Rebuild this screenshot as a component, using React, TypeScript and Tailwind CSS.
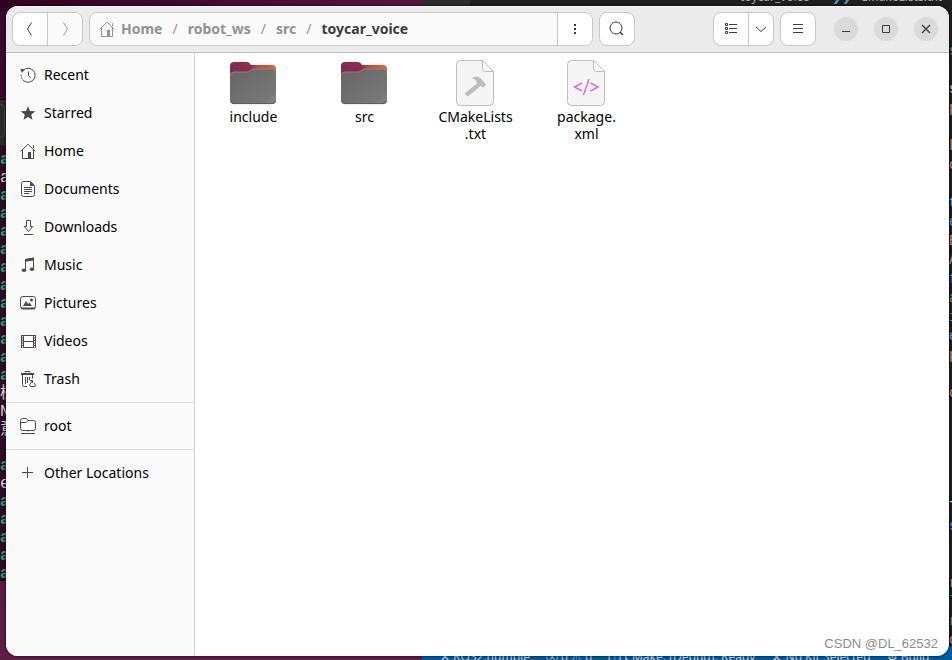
import type { ReactNode } from "react";

function Icon({ children, className = "" }: { children: ReactNode; className?: string }) {
  return (
    <svg viewBox="0 0 16 16" className={`size-4 shrink-0 ${className}`} fill="none" stroke="currentColor" aria-hidden="true">
      {children}
    </svg>
  );
}

const HomeIcon = () => (
  <Icon>
    <path d="M.6 8.4 8 1.2l7.4 7.2M2.5 7v8.5h11V7M13.5 2.2v3" />
    <path d="M8 9h3v6.5H8z" fill="currentColor" stroke="none" />
  </Icon>
);

const icons: Record<string, ReactNode> = {
  Recent: (
    <Icon>
      <path d="M3.1 3.4A7 7 0 1 1 3 13" />
      <path d="M1.200 7.500A7 7 0 0 0 3 13" strokeDasharray="2 1" />
      <path d="M8.500 4.500v4l2 2.200" />
      <path d="M.4 1.800 5 2.400 1.800 5.800z" fill="currentColor" stroke="none" />
    </Icon>
  ),
  Starred: (
    <Icon>
      <path d="m8 1 2 4.900 5.200.4-4 3.400 1.300 5.100L8 12l-4.500 2.800 1.300-5.100-4-3.400L6 5.900z" fill="currentColor" stroke="none" />
    </Icon>
  ),
  Home: <HomeIcon />,
  Documents: (
    <Icon>
      <path d="M3.500.5h7l4 4v9a2 2 0 0 1-2 2h-9a2 2 0 0 1-2-2v-11a2 2 0 0 1 2-2zM4 6.500h8M4 8.500h8M4 10.500h8M4 12.500h5" />
      <path d="M10 .5 14.500 5H10z" fill="currentColor" stroke="none" />
    </Icon>
  ),
  Downloads: (
    <Icon>
      <path d="M6.500 1.500h4v6h2.200l-4.200 5-4.200-5h2.200zM4 15.500h9" />
    </Icon>
  ),
  Music: (
    <Icon>
      <path d="M5.500 13V2.700l8-1.500V12" />
      <path d="M5 1.900 14 .6v2.900L5 4.800z" fill="currentColor" stroke="none" />
      <ellipse cx="4" cy="13.300" rx="2.200" ry="1.800" fill="currentColor" stroke="none" />
      <ellipse cx="12" cy="12.300" rx="2.200" ry="1.800" fill="currentColor" stroke="none" />
    </Icon>
  ),
  Pictures: (
    <Icon>
      <rect x=".5" y="1.500" width="15" height="12" rx="2" />
      <path d="M1 12.500v.5q0 1.500 1.500 1.500h11q1.500 0 1.500-1.500v-.5zM3 11l3-5 2 3 1.500-1.500L12 11z" fill="currentColor" stroke="none" />
      <circle cx="11.500" cy="5" r="1.500" fill="currentColor" stroke="none" />
    </Icon>
  ),
  Videos: (
    <Icon>
      <path d="M3.500 2v12.500M13.500 2v12.500M3.500 2.500h10M3.500 8.500h10M3.500 14.500h10M1.500 2v13M15.500 2v13" />
      <path d="M2.500 2v13M14.500 2v13" strokeDasharray="1 1.500" />
    </Icon>
  ),
  Trash: (
    <Icon>
      <path d="M1 2.500h13M1 3.500h13M5 1.500V.5h5v1M2.500 4v9.500a2 2 0 0 0 2 2H7M12.500 4v3.500M5.500 6v7M7.500 6v6M9.500 6v3" />
      <path d="m12.500 9.500-2.800 4.300q-.4 1.700 1.300 1.700h3q1.700 0 1.300-1.700L14 12M10 9.500h2.500V12" />
    </Icon>
  ),
  root: (
    <Icon>
      <path d="M.5 10.500v-8a2 2 0 0 1 2-2h4L8 2.500h5.500a2 2 0 0 1 2 2v6a2 2 0 0 1-2 2h-11a2 2 0 0 1-2-2zM.5 4.500H6l2-2M1 15.500h14M8 12.500v1" />
    </Icon>
  ),
  "Other Locations": (
    <Icon>
      <path d="M7.500 2v11M2 7.500h11" />
    </Icon>
  ),
};

const placeGroups = [
  ["Recent", "Starred", "Home", "Documents", "Downloads", "Music", "Pictures", "Videos", "Trash"],
  ["root"],
  ["Other Locations"],
];

function FolderArt() {
  return (
    <svg viewBox="1 0 48 48" className="size-12" aria-hidden="true">
      <defs>
        <linearGradient id="tab" x1="0" x2="1">
          <stop offset="0" stopColor="#7f2a55" />
          <stop offset=".45" stopColor="#8f2c4c" />
          <stop offset=".6" stopColor="#c44a3c" />
          <stop offset="1" stopColor="#ec5f2b" />
        </linearGradient>
        <linearGradient id="front" x1="0" y1="0" x2="1" y2="1">
          <stop offset="0" stopColor="#656565" />
          <stop offset="1" stopColor="#7b7b7b" />
        </linearGradient>
      </defs>
      <path d="M1 7a4 4 0 0 1 4-4h13q2 0 3 1.500l1 1.500h21a4 4 0 0 1 4 4v12H1z" fill="url(#tab)" />
      <path d="M1 17q0-4 4-4h13q2 0 3.500-1.500Q23 10 25 10h18q4 0 4 4v27a4 4 0 0 1-4 4H5a4 4 0 0 1-4-4z" fill="url(#front)" />
      <path d="M1.500 16.500q0-3.500 3.500-3.500h13q2 0 3.500-1.500Q23 10 25 10h18q3.500 0 3.500 3.500" fill="none" stroke="#8d8d8d" strokeWidth=".8" />
      <path d="M47 34v7a4 4 0 0 1-4 4h-7z" fill="#7f7f7f" />
      <path d="M1.500 42q.8 2.600 3.500 2.600h38q2.700 0 3.500-2.600" fill="none" stroke="#5c5c5c" />
    </svg>
  );
}

function PageArt({ children }: { children: ReactNode }) {
  return (
    <svg viewBox="0 0 48 48" className="size-12" aria-hidden="true">
      <path d="M8.500 1.500h22l11 11v30a4 4 0 0 1-4 4h-29a4 4 0 0 1-4-4v-37a4 4 0 0 1 4-4z" fill="#f5f5f5" stroke="#bdbdbd" />
      <path d="M30.500 1.500v8a3 3 0 0 0 3 3h8z" fill="#fcfcfc" stroke="#bdbdbd" />
      {children}
    </svg>
  );
}

const files: { name: string; lines: string[]; art: ReactNode }[] = [
  { name: "include", lines: ["include"], art: <FolderArt /> },
  { name: "src", lines: ["src"], art: <FolderArt /> },
  {
    name: "CMakeLists.txt",
    lines: ["CMakeLists", ".txt"],
    art: (
      <PageArt>
        <path d="M12.500 34.500 25 24.500l-1-3q-2-2.500-4.500-2 4-3 9-.5l5.500 6.500-2.500 3-3-1.500L16 37.500z" fill="#bdbdbd" />
      </PageArt>
    ),
  },
  {
    name: "package.xml",
    lines: ["package.", "xml"],
    art: (
      <PageArt>
        <path d="m19 24-7.500 4 7.500 4M27.500 24l7.500 4-7.500 4M26 20l-5.500 16" fill="none" stroke="#dc70ce" strokeWidth="1.500" />
      </PageArt>
    ),
  },
];

const terminalLines = ["a", "a", "a", "a", "a", "a", "a", "a", "a", "a", "a", "a", "a", "植", "N", "意", "", "a", "e", "a", "a", "a", "a", "a"];
const plainTerminalLines = [1, 13, 14, 15, 18];

const editorLines: [string, string][] = [
  ["s", "text-[#6a9955]"], ["", ""], ["s", "text-[#d4d4d4]"], ["p", "text-[#ce9178]"], ["", ""],
  ["k", "text-[#ce9178]"], ["c", "text-[#ce9178]"], ["", ""], ["t", "text-[#9cdcfe]"], ["e", "text-[#569cd6]"],
  ["E", "text-[#ce9178]"], ["A", "text-[#ce9178]"], ["f", "text-[#569cd6]"], ["a", "text-[#6a9955]"], ["i", "text-[#569cd6]"],
  ["e", "text-[#569cd6]"], ["p", "text-[#ce9178]"], ["", ""], ["c", "text-[#ce9178]"], ["", ""], ["", ""], ["", ""], ["", ""], ["", ""],
  ["T", "text-[#9cdcfe]"], ["s", "text-[#569cd6]"], ["", ""], ["", ""], ["r", "text-[#ce9178]"], ["l", "text-[#6a9955]"], ["r", "text-[#6a9955]"], ["c", "text-[#ce9178]"],
];

function DesktopBehind() {
  return (
    <div className="absolute inset-0 overflow-hidden bg-linear-to-b from-[#35082a] to-[#5e1d45]" aria-hidden="true">
      <div className="absolute inset-x-0 top-0 h-2 bg-linear-to-r from-[#2f0420] to-[#5c1740] to-50%" />
      <div className="absolute top-[99px] left-0 h-[482px] w-40 border-y border-[#150510] bg-[#300a24]">
        <div className="h-[45px] bg-[#2b2b2b] py-1">
          <div className="h-[34px] w-[5px] rounded-r-md border border-l-0 border-[#444]" />
        </div>
        <div className="pt-1.5 font-['Liberation_Mono','Noto_Sans_CJK_SC',monospace] text-base leading-[18px]">
          {terminalLines.map((line, i) => (
            <div key={i} className={`h-[18px] ${plainTerminalLines.includes(i) ? "text-[#d8d0d5]" : "font-bold text-[#26a269]"}`}>
              {line}
            </div>
          ))}
        </div>
      </div>
      <div className="absolute inset-y-0 right-0 left-[422px] bg-[#1e1e1e] font-['Noto_Sans',sans-serif] text-xs">
        <div className="h-2 w-12 bg-[#2d2d2d]" />
        <div className="absolute top-[-12px] right-2.5 flex gap-2 text-xs leading-[18px] whitespace-nowrap text-[#a5a5a5]">
          <span>toycar_voice</span>
          <span>&gt;</span>
          <span className="text-[#519aba]">❯❯</span>
          <span>CMakeLists.txt</span>
        </div>
        <div className="absolute top-[42px] right-0 w-[3px] font-['Liberation_Mono',monospace] text-sm leading-[19px]">
          {editorLines.map(([text, color], i) => (
            <div key={i} className={`h-[19px] ${color}`}>{text}</div>
          ))}
        </div>
        <div className="absolute inset-x-0 bottom-[-8px] flex h-[22px] items-center gap-4 bg-[#005a9e] pl-[18px] text-xs whitespace-nowrap text-[#c5d9e8]">
          <span>✕ ROS2.humble</span>
          <span>ⓧ 0 ⚠ 0</span>
          <span>(↑) CMake: [Debug]: Ready</span>
          <span>⚒ No Kit Selected</span>
          <span>⚙ Build</span>
        </div>
      </div>
    </div>
  );
}

const box = "flex h-[34px] shrink-0 overflow-hidden rounded-lg border border-[#c8c8c8] bg-white";
const cell = "flex items-center justify-center text-[#3d3d3d]";

function HeaderBar() {
  return (
    <header className="flex items-center gap-1.5 border-b border-[#bfbfbf] bg-[#ebebeb] px-1.5 py-1.5 shadow-[inset_0_1px_0_#f8f8f8]">
      <div className={box}>
        <button aria-label="Back" className={`${cell} w-[35px] border-r border-[#c8c8c8]`}>
          <Icon><path d="M9.500 1.500 5.500 8l4 6.500" /></Icon>
        </button>
        <button aria-label="Forward" className={`${cell} w-[34px] bg-[#fafafa] text-[#999]`}>
          <Icon><path d="m6.500 1.500 4 6.500-4 6.500" /></Icon>
        </button>
      </div>
      <div className="flex h-[34px] max-w-[504px] min-w-0 flex-1 overflow-hidden rounded-lg border border-[#c8c8c8] bg-[#fafafa]">
        <nav aria-label="Path" className="flex min-w-0 flex-1 items-center gap-2.5 pl-[9px] text-sm font-bold text-[#929292]">
          <button className="flex items-center gap-1.5"><HomeIcon />Home</button>
          <span className="font-normal">/</span>
          <button>robot_ws</button>
          <span className="font-normal">/</span>
          <button>src</button>
          <span className="font-normal">/</span>
          <button className="text-[#3d3d3d]">toycar_voice</button>
        </nav>
        <button aria-label="Folder menu" className={`${cell} w-[35px] border-l border-[#c8c8c8] bg-white`}>
          <Icon><path d="M7 3h2v2H7zM7 7h2v2H7zM7 11h2v2H7z" fill="currentColor" stroke="none" /></Icon>
        </button>
      </div>
      <div className={box}>
        <button aria-label="Search" className={`${cell} w-[34px]`}>
          <Icon><circle cx="7" cy="7" r="6" /><path d="m11 11 3 3" strokeWidth="1.500" /></Icon>
        </button>
      </div>
      <div className="ml-auto flex items-center gap-1.5">
        <div className={box}>
          <button aria-label="List view" className={`${cell} w-[35px] border-r border-[#c8c8c8]`}>
            <Icon><path d="M2.500 2.500h2v2h-2zM2.500 6.500h2v2h-2zM2.500 10.500h2v2h-2zM6 3.500h8M6 7.500h8M6 11.500h8" /></Icon>
          </button>
          <button aria-label="View options" className={`${cell} w-6`}>
            <Icon><path d="m3 6 5 4.500L13 6" /></Icon>
          </button>
        </div>
        <div className={box}>
          <button aria-label="Main menu" className={`${cell} w-[34px]`}>
            <Icon><path d="M3 3.500h10M3 7.500h10M3 11.500h10" /></Icon>
          </button>
        </div>
        <div className="flex gap-4 pr-[5px] pl-3">
          <button aria-label="Minimize" className={`${cell} size-6 rounded-full bg-[#dadada]`}>
            <Icon><path d="M4 10.500h8" /></Icon>
          </button>
          <button aria-label="Maximize" className={`${cell} size-6 rounded-full bg-[#dadada]`}>
            <Icon><path d="M4.500 4.500h7v7h-7z" /></Icon>
          </button>
          <button aria-label="Close" className={`${cell} size-6 rounded-full bg-[#dadada]`}>
            <Icon><path d="m4 4 8 8M12 4l-8 8" strokeWidth="1.300" /></Icon>
          </button>
        </div>
      </div>
    </header>
  );
}

function Sidebar() {
  return (
    <aside className="w-[189px] shrink-0 divide-y divide-[#dedede] border-r border-[#d5d5d5] bg-[#fafafa]">
      {placeGroups.map((group, i) => (
        <ul key={i} className={`pb-1 ${i === 0 ? "pt-[3px]" : "pt-1"}`}>
          {group.map((place) => (
            <li key={place}>
              <button className="flex h-[38px] w-full items-center gap-2 px-3.5 text-left text-sm text-black">
                <span className="text-[#4a4a4a]">{icons[place]}</span>
                {place}
              </button>
            </li>
          ))}
        </ul>
      ))}
    </aside>
  );
}

export default function App() {
  return (
    <div className="relative h-screen overflow-hidden pt-1.5 pr-[3px] pb-1 pl-1.5 font-['Noto_Sans',sans-serif]">
      <DesktopBehind />
      <div className="relative flex h-full flex-col overflow-hidden rounded-xl bg-white shadow-[0_0_2px_1px_rgba(0,0,0,0.45)]">
        <HeaderBar />
        <div className="flex min-h-0 flex-1">
          <Sidebar />
          <main className="flex flex-1 flex-wrap content-start px-[3px] pt-1.5">
            {files.map((file) => (
              <button key={file.name} aria-label={file.name} className="flex w-[111px] flex-col items-center gap-px text-sm leading-[17px] text-black">
                {file.art}
                <span>
                  {file.lines.map((line) => (
                    <span key={line} className="block">{line}</span>
                  ))}
                </span>
              </button>
            ))}
          </main>
        </div>
        <p className="absolute right-[11px] bottom-1 font-['Liberation_Sans',sans-serif] text-[13px] leading-4 text-[#8c8c8c]">CSDN @DL_62532</p>
      </div>
    </div>
  );
}
